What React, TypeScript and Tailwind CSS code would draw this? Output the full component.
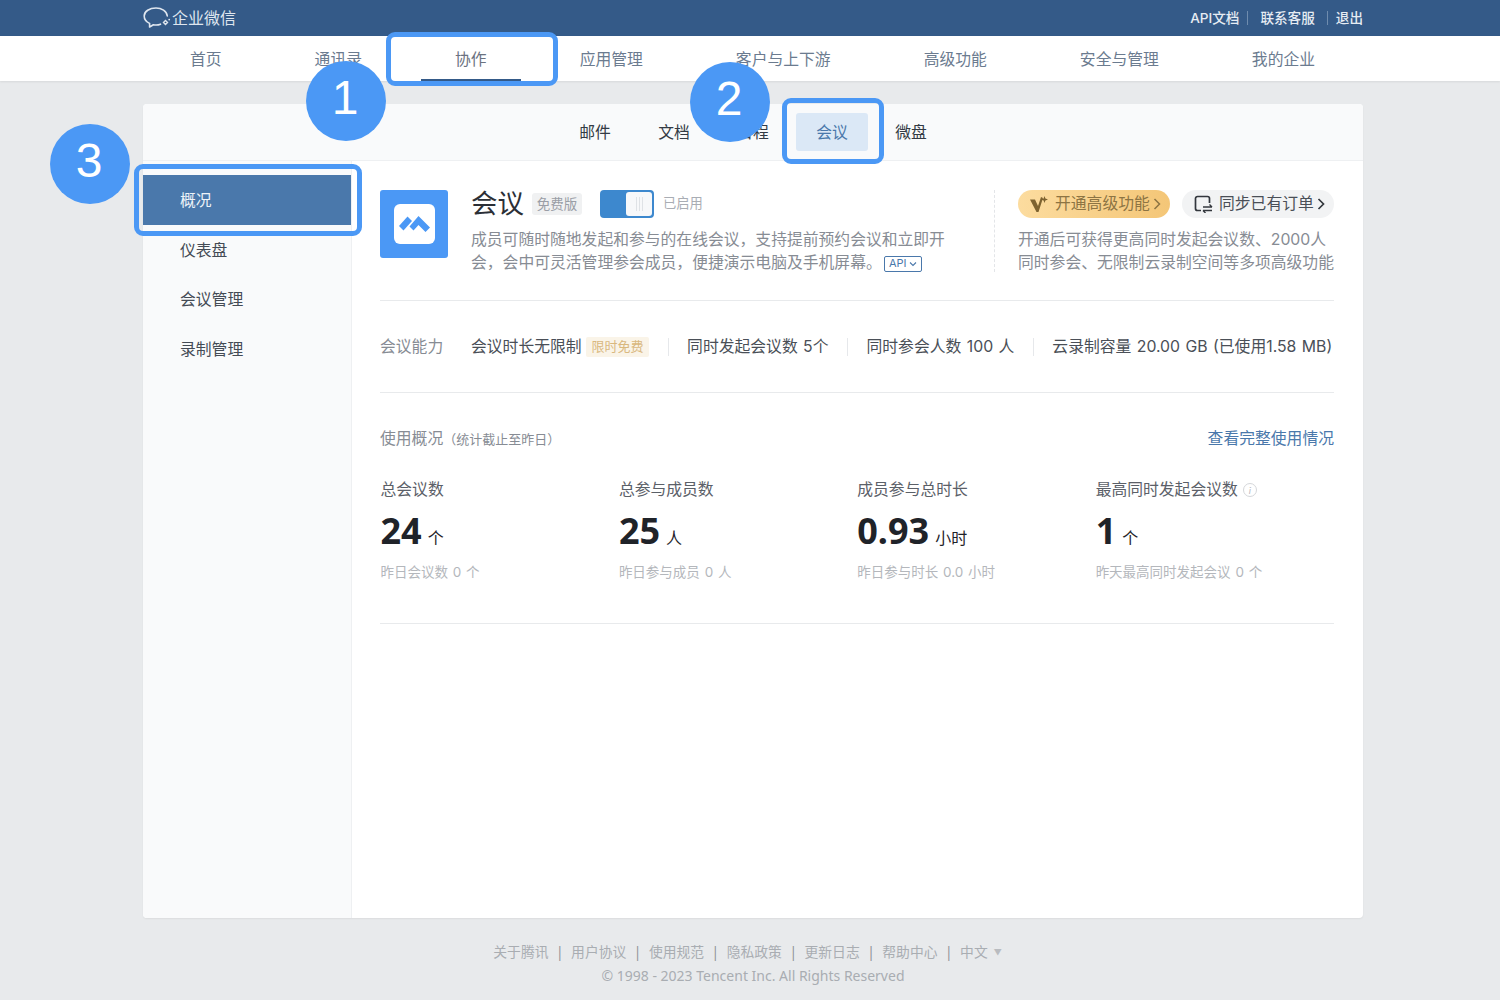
const font = { fontFamily: 'Inter, "Noto Sans CJK SC", sans-serif' };
const notoFont = { fontFamily: '"Noto Sans", "Noto Sans CJK SC", sans-serif' };

const navItems = ["首页", "通讯录", "协作", "应用管理", "客户与上下游", "高级功能", "安全与管理", "我的企业"];
const tabs = ["邮件", "文档", "日程", "会议", "微盘"];
const sideItems = ["概况", "仪表盘", "会议管理", "录制管理"];
const footerLinks = ["关于腾讯", "用户协议", "使用规范", "隐私政策", "更新日志", "帮助中心"];

const stats = [
  { label: "总会议数", value: "24", unit: "个", sub: "昨日会议数 0 个" },
  { label: "总参与成员数", value: "25", unit: "人", sub: "昨日参与成员 0 人" },
  { label: "成员参与总时长", value: "0.93", unit: "小时", sub: "昨日参与时长 0.0 小时" },
  { label: "最高同时发起会议数", value: "1", unit: "个", sub: "昨天最高同时发起会议 0 个", info: true },
];

function WeworkLogo() {
  return (
    <svg width="28" height="24" viewBox="0 0 28 24" fill="none" stroke="#dfe6ef" strokeWidth="1.6">
      <path d="M17.5 18.2c-1.3.5-2.7.8-4.3.8-1 0-1.9-.1-2.8-.3L6.6 21v-3.6C3.2 15.8 1.2 13 1.2 10 1.2 5.400 6.500 2 13 2c5.600 0 10.700 3 11.300 8" strokeLinecap="round" strokeLinejoin="round" />
      <path d="M22.500 14.500l2 2-2 2-2-2z" strokeWidth="1.400" />
      <circle cx="26.200" cy="13.600" r=".9" fill="#dfe6ef" stroke="none" />
    </svg>
  );
}

function MeetingIcon() {
  return (
    <div className="flex h-[68px] w-[68px] shrink-0 items-center justify-center rounded-[3px] bg-[#4b98f5]">
      <div className="flex h-[40px] w-[41px] items-center justify-center rounded-[6px] bg-white">
        <svg width="33" height="18" viewBox="0 0 33 18" fill="#4b98f5">
          <path d="M9.500 1.500 14 6 5.500 15.500 1 11z" />
          <path d="M20.500 1 32 12.500 27.500 17 20.500 10 15.500 15.500 11.500 11.500z" />
        </svg>
      </div>
    </div>
  );
}

function Sep() {
  return <span className="mx-[18.500px] h-[18px] w-px bg-[#e6e8eb]" />;
}

function Ring({ className }: { className: string }) {
  return <div className={`pointer-events-none absolute rounded-[9px] border-[5px] border-[#4b98f5] ${className}`} />;
}

function Marker({ className, n }: { className: string; n: string }) {
  return (
    <div
      className={`absolute flex h-[80px] w-[80px] items-center justify-center rounded-full bg-[#4b98f5] pb-[7px] pr-[2px] text-[48px] leading-none text-white ${className}`}
      style={{ fontFamily: '"Liberation Sans", sans-serif' }}
    >
      {n}
    </div>
  );
}

export default function App() {
  return (
    <div className="relative h-[1000px] w-[1500px] overflow-hidden bg-[#e8eaec]" style={font}>
      <header className="flex h-[36px] items-center justify-between bg-[#345a88] pl-[143px] pr-[137px]">
        <div className="flex items-center gap-[1px] text-[16px] text-[#dfe6ef]">
          <WeworkLogo />
          <span>企业微信</span>
        </div>
        <div className="flex items-center text-[13.600px] font-medium text-[#e6ecf3]">
          <span>API文档</span>
          <span className="mx-[8px] h-[14px] w-px bg-[#6f8cae]" />
          <span className="ml-[4px]">联系客服</span>
          <span className="mx-[12px] h-[14px] w-px bg-[#6f8cae]" />
          <span className="-ml-[4px]">退出</span>
        </div>
      </header>

      <nav className="flex h-[45px] items-stretch bg-white pl-[156px] shadow-[0_1px_2px_rgba(0,0,0,0.08)]">
        {navItems.map((item) => (
          <div
            key={item}
            className={`mr-[25px] flex items-center border-b-[2px] px-[34px] pt-[4px] text-[15.800px] ${
              item === "协作" ? "border-[#345a88] text-[#6b7280]" : "border-transparent text-[#6b7b8f]"
            }`}
          >
            {item}
          </div>
        ))}
      </nav>

      <main className="ml-[143px] mt-[23px] flex h-[814px] w-[1220px] flex-col overflow-hidden rounded-[4px] bg-white shadow-[0_1px_2px_rgba(0,0,0,0.06)]">
        <div className="flex h-[57px] shrink-0 items-center justify-center gap-[7px] border-b border-[#eef0f2] bg-[#f9fafb]">
          {tabs.map((tab) => (
            <div
              key={tab}
              className={`flex h-[38px] w-[72px] items-center justify-center rounded-[3px] pt-[2px] text-[15.800px] ${
                tab === "会议" ? "bg-[#dbe8f6] text-[#4a78ab]" : "text-[#333a44]"
              }`}
            >
              {tab}
            </div>
          ))}
        </div>

        <div className="flex min-h-0 flex-1">
          <aside className="w-[209px] shrink-0 border-r border-[#eef0f2] bg-[#f9fafb] pt-[14px]">
            {sideItems.map((item) => (
              <div
                key={item}
                className={`flex h-[49.700px] items-center pl-[37px] pt-[2px] text-[15.800px] ${
                  item === "概况" ? "bg-[#4a78ab] text-[#eef3f8]" : "text-[#444b55]"
                }`}
              >
                {item}
              </div>
            ))}
          </aside>

          <section className="flex-1 pl-[28px] pr-[29px] pt-[29px]">
            <div className="flex h-[111px] border-b border-[#e8eaec]">
              <MeetingIcon />
              <div className="ml-[23px] w-[524px]">
                <div className="flex h-[28px] items-center">
                  <span className="pb-[2px] text-[26.500px] leading-none text-[#2b2f36]">会议</span>
                  <span className="ml-[8px] flex h-[22px] w-[50px] items-center justify-center rounded-[3px] bg-[#f0f1f2] text-[13.500px] text-[#9a9ea6]">
                    免费版
                  </span>
                  <span className="ml-[18px] flex h-[28px] w-[54px] items-center justify-end rounded-[4px] bg-[#3d88ce] p-[2px]">
                    <span className="flex h-[24px] w-[26px] items-center justify-center gap-[2px] rounded-[3px] bg-[#f7f8fa]">
                      <i className="h-[14px] w-px bg-[#dfe2e6]" />
                      <i className="h-[14px] w-px bg-[#dfe2e6]" />
                      <i className="h-[14px] w-px bg-[#dfe2e6]" />
                    </span>
                  </span>
                  <span className="ml-[9px] text-[13.300px] text-[#a9adb4]">已启用</span>
                </div>
                <p className="mt-[10px] text-[15.800px] leading-[23px] text-[#878c94]">
                  成员可随时随地发起和参与的在线会议，支持提前预约会议和立即开
                  <br />
                  会，会中可灵活管理参会成员，便捷演示电脑及手机屏幕。
                  <span className="ml-[2px] inline-flex h-[16px] w-[38px] items-center justify-center rounded-[2px] border border-[#4a78ab] align-[1px] text-[11px] leading-none text-[#4a78ab]">
                    API
                    <svg width="8" height="6" viewBox="0 0 8 6" fill="none" stroke="#4a78ab" strokeWidth="1.100" className="ml-[2px]">
                      <path d="M1 1.500l3 3 3-3" />
                    </svg>
                  </span>
                </p>
              </div>
              <div className="ml-[-1px] h-[82px] border-l border-dashed border-[#e3e5e8]" />
              <div className="ml-[23px] flex-1">
                <div className="flex items-center justify-between">
                  <span className="flex h-[28px] w-[152px] items-center rounded-full bg-gradient-to-r from-[#fcdc9f] to-[#f4c677] pl-[12px] text-[15.800px] text-[#8d7443]">
                    <svg width="18" height="17" viewBox="0 0 18 17" fill="#7e6330" className="mr-[7px]">
                      <path d="M0 3.500h5l3 6.500 3-9 2 1-4.500 14H6.500z" />
                      <path d="M14.500 0l.9 2.600L18 3.500l-2.600.9-.9 2.600-.9-2.600L11 3.500l2.600-.9z" />
                    </svg>
                    开通高级功能
                    <svg width="8" height="12" viewBox="0 0 8 12" fill="none" stroke="#8d7443" strokeWidth="1.500" className="ml-[3px]">
                      <path d="M1.500 1l5 5-5 5" />
                    </svg>
                  </span>
                  <span className="flex h-[28px] w-[152px] items-center rounded-full bg-[#f2f3f4] pl-[12px] text-[15.800px] text-[#4a4f57]">
                    <svg width="19" height="18" viewBox="0 0 19 18" fill="none" stroke="#33373d" strokeWidth="1.700" className="mr-[6px]">
                      <path d="M7 15.500H3.500a2 2 0 0 1-2-2v-10a2 2 0 0 1 2-2h10a2 2 0 0 1 2 2V8" />
                      <path d="M9 12h9M18 15.500H9M15.500 9.500 18 12M11.500 18 9 15.500" strokeWidth="1.400" />
                    </svg>
                    同步已有订单
                    <svg width="8" height="12" viewBox="0 0 8 12" fill="none" stroke="#33373d" strokeWidth="1.700" className="ml-[3px]">
                      <path d="M1.500 1l5 5-5 5" />
                    </svg>
                  </span>
                </div>
                <p className="mt-[10px] whitespace-nowrap text-[15.800px] leading-[23px] text-[#878c94]">
                  开通后可获得更高同时发起会议数、2000人
                  <br />
                  同时参会、无限制云录制空间等多项高级功能
                </p>
              </div>
            </div>

            <div className="flex h-[92px] items-center whitespace-nowrap border-b border-[#e8eaec] text-[15.800px] text-[#4a4f57] [word-spacing:1px]">
              <span className="w-[91px] text-[#878c94]">会议能力</span>
              <span>会议时长无限制</span>
              <span className="ml-[4.500px] flex h-[20px] w-[63px] items-center justify-center rounded-[2px] bg-[#faf4e8] text-[13px] text-[#d9b87f]">
                限时免费
              </span>
              <Sep />
              <span>同时发起会议数 5个</span>
              <Sep />
              <span>同时参会人数 100 人</span>
              <Sep />
              <span>云录制容量 20.00 GB (已使用1.58 MB)</span>
            </div>

            <div className="flex items-center justify-between pt-[35px]">
              <div className="text-[15.800px] leading-[22px] text-[#878c94]">
                使用概况
                <span className="text-[13px]">（统计截止至昨日）</span>
              </div>
              <span className="text-[15.800px] leading-[22px] text-[#4a78ab]">查看完整使用情况</span>
            </div>

            <div className="mt-[29px] grid h-[145px] grid-cols-4 border-b border-[#e8eaec] pl-[0.500px]">
              {stats.map((s) => (
                <div key={s.label}>
                  <div className="flex h-[22px] items-center text-[15.800px] text-[#5b6068]">
                    {s.label}
                    {s.info && (
                      <span className="ml-[5px] flex h-[14px] w-[14px] items-center justify-center rounded-full border border-[#d5d7da] text-[9px] italic leading-none text-[#b5b8bd]">
                        i
                      </span>
                    )}
                  </div>
                  <div className="mt-[9px] flex h-[42px] items-baseline text-[#1f2329]">
                    <span className="text-[36px] font-bold leading-[42px]" style={notoFont}>{s.value}</span>
                    <span className="ml-[6px] text-[16px]">{s.unit}</span>
                  </div>
                  <div className="mt-[9px] text-[13.500px] leading-[22px] text-[#b4b7bc] [word-spacing:1px]">{s.sub}</div>
                </div>
              ))}
            </div>
          </section>
        </div>
      </main>

      <footer className="ml-[143px] mt-[22px] w-[1220px] text-center text-[13.800px] leading-[24px] text-[#a9adb2]" style={notoFont}>
        <div className="flex items-center justify-center pr-[11px]">
          {footerLinks.map((link) => (
            <span key={link} className="flex items-center">
              {link}
              <span className="mx-[7.500px] text-[#8f9398]">|</span>
            </span>
          ))}
          <span>中文</span>
          <span className="ml-[6px] text-[8px] text-[#b9bcc0]">▼</span>
        </div>
        <div className="text-[14px]">© 1998 - 2023 Tencent Inc. All Rights Reserved</div>
      </footer>

      <Ring className="left-[386px] top-[32px] h-[54px] w-[172px]" />
      <Ring className="left-[782px] top-[98px] h-[66px] w-[102px]" />
      <Ring className="left-[134px] top-[164px] h-[72px] w-[228px]" />
      <Marker className="left-[306px] top-[61px]" n="1" />
      <Marker className="left-[690px] top-[62px]" n="2" />
      <Marker className="left-[50px] top-[124px]" n="3" />
    </div>
  );
}
